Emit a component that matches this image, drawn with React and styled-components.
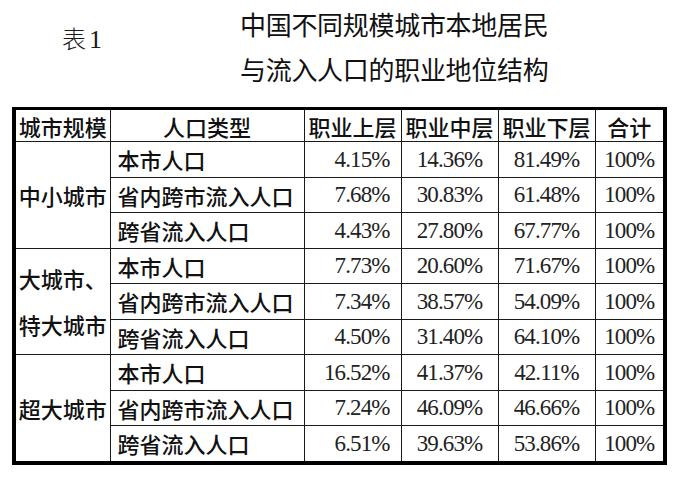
import React from "react";
import styled, { createGlobalStyle } from "styled-components";

const GlobalStyle = createGlobalStyle`
  html, body {
    margin: 0;
    padding: 0;
    background: #fff;
  }
  body {
    font-family: "Noto Sans CJK SC", "Noto Sans", sans-serif;
    color: #111;
  }
`;

const Page = styled.div`
  width: 682px;
  height: 481px;
  background: #fff;
  overflow: hidden;
`;

const Header = styled.header`
  display: flex;
  align-items: flex-start;
  padding: 1px 0 0 62px;
  height: 93px;
`;

const TableNo = styled.div`
  font-size: 24px;
  line-height: 24px;
  padding-top: 25px;
  width: 178px;
  color: #1a1a1a;
  font-weight: 300;
  & span {
    font-family: "Liberation Serif", serif;
    font-size: 26px;
    margin-left: 3px;
  }
`;

const Title = styled.h1`
  margin: 0;
  font-size: 26px;
  font-weight: 400;
  line-height: 45px;
  letter-spacing: -0.3px;
  color: #111;
`;

const Frame = styled.div`
  box-sizing: border-box;
  margin: 13px 0 0 12px;
  width: 655px;
  border: 4px solid #000;
  border-top-width: 3px;
`;

const Table = styled.table`
  width: 647px;
  table-layout: fixed;
  border-collapse: collapse;
  border-style: hidden;
`;

const Col = styled.col`
  width: ${(p) => p.$w}px;
`;

const Cell = styled.td`
  border: 1.5px solid #1a1a1a;
  padding: 0 0 0 7px;
  height: 34.5px;
  font-size: 22px;
  font-weight: 500;
  line-height: 1;
  white-space: nowrap;
  text-align: left;
  color: #111;
`;

const Head = styled(Cell).attrs({ as: "th" })`
  height: 31px;
  padding: 0;
  text-align: center;
`;

const Num = styled(Cell)`
  font-family: "Liberation Serif", serif;
  font-size: 23px;
  font-weight: 400;
  letter-spacing: -0.9px;
  color: #222;
  padding: 0 ${(p) => (p.$right ? "11px" : "0")} 0 0;
  text-align: ${(p) => (p.$right ? "right" : "center")};
`;

const Group = styled(Cell)`
  text-align: center;
  padding: 0;
  line-height: 46px;
`;

const widths = [94, 194, 97, 97, 97, 68];
const heads = ["城市规模", "人口类型", "职业上层", "职业中层", "职业下层", "合计"];

const groups = [
  {
    name: ["中小城市"],
    rows: [
      ["本市人口", "4.15%", "14.36%", "81.49%"],
      ["省内跨市流入人口", "7.68%", "30.83%", "61.48%"],
      ["跨省流入人口", "4.43%", "27.80%", "67.77%"],
    ],
  },
  {
    name: ["大城市、", "特大城市"],
    rows: [
      ["本市人口", "7.73%", "20.60%", "71.67%"],
      ["省内跨市流入人口", "7.34%", "38.57%", "54.09%"],
      ["跨省流入人口", "4.50%", "31.40%", "64.10%"],
    ],
  },
  {
    name: ["超大城市"],
    rows: [
      ["本市人口", "16.52%", "41.37%", "42.11%"],
      ["省内跨市流入人口", "7.24%", "46.09%", "46.66%"],
      ["跨省流入人口", "6.51%", "39.63%", "53.86%"],
    ],
  },
];

export default function App() {
  return (
    <Page>
      <GlobalStyle />
      <Header>
        <TableNo>
          表<span>1</span>
        </TableNo>
        <Title>
          中国不同规模城市本地居民
          <br />
          与流入人口的职业地位结构
        </Title>
      </Header>
      <Frame>
        <Table>
          <colgroup>
            {widths.map((w, i) => (
              <Col key={i} $w={w} />
            ))}
          </colgroup>
          <thead>
            <tr>
              {heads.map((h) => (
                <Head key={h}>{h}</Head>
              ))}
            </tr>
          </thead>
          <tbody>
            {groups.map((g) =>
              g.rows.map((r, i) => (
                <tr key={g.name[0] + i}>
                  {i === 0 && (
                    <Group rowSpan={3}>
                      {g.name.map((n) => (
                        <div key={n}>{n}</div>
                      ))}
                    </Group>
                  )}
                  <Cell>{r[0]}</Cell>
                  <Num $right>{r[1]}</Num>
                  <Num>{r[2]}</Num>
                  <Num>{r[3]}</Num>
                  <Num>100%</Num>
                </tr>
              ))
            )}
          </tbody>
        </Table>
      </Frame>
    </Page>
  );
}
